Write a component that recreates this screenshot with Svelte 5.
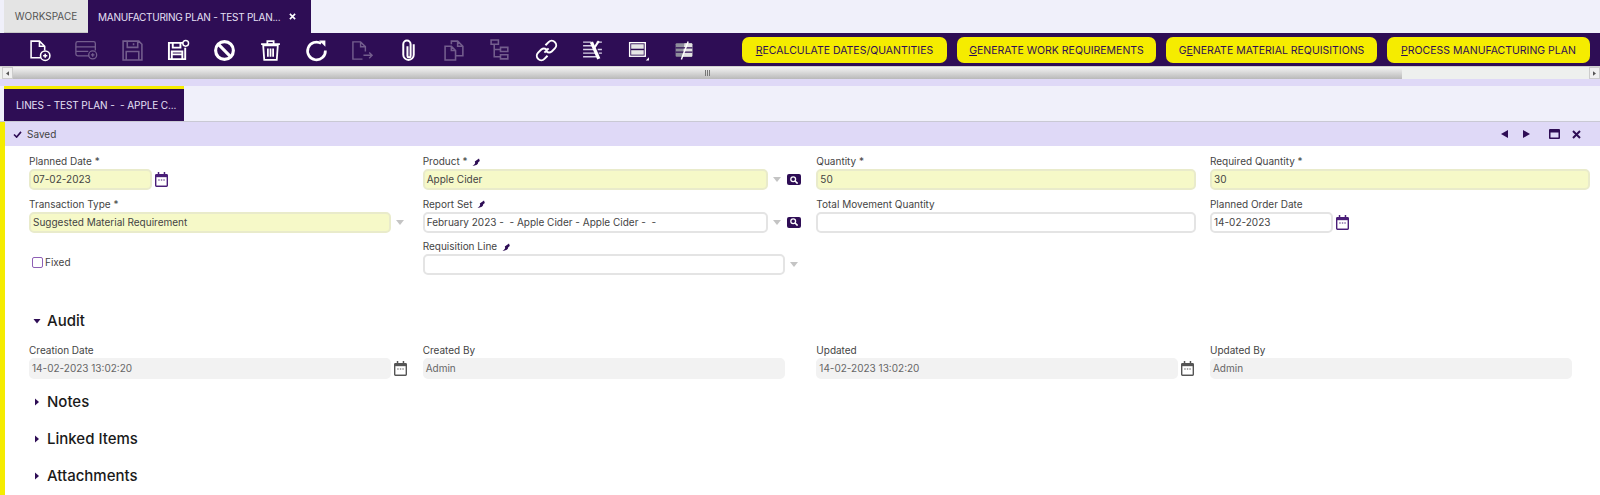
<script>
  const buttons = [
    { key: 'R', rest: 'ECALCULATE DATES/QUANTITIES', width: 205 },
    { key: 'G', rest: 'ENERATE WORK REQUIREMENTS', width: 199 },
    { pre: 'G', key: 'E', rest: 'NERATE MATERIAL REQUISITIONS', width: 211 },
    { key: 'P', rest: 'ROCESS MANUFACTURING PLAN', width: 203 }
  ];
  const sections = ['Notes', 'Linked Items', 'Attachments'];
</script>

{#snippet calendar(cls)}
  <svg class="cal {cls}" viewBox="0 0 14 16" width="13" height="15">
    <path d="M3 0h1.600v2H9.400V0H11v2h1.500A1.500 1.500 0 0 1 14 3.500v11A1.500 1.500 0 0 1 12.500 16h-11A1.500 1.500 0 0 1 0 14.500v-11A1.500 1.500 0 0 1 1.500 2H3z" fill="currentColor" />
    <rect x="1.500" y="5.500" width="11" height="9" fill="#fff" />
    <path d="M3.500 8.500h1.500M6.300 8.500h1.500M9 8.500h1.500" stroke="currentColor" stroke-width="1.200" />
  </svg>
{/snippet}

{#snippet arrow()}
  <svg class="drop" viewBox="0 0 8 5" width="8" height="5"><path d="M0 0h8L4 5z" fill="#c4c4c4" /></svg>
{/snippet}

{#snippet search()}
  <span class="search">
    <svg viewBox="0 0 10 10" width="8" height="8"><circle cx="4" cy="4" r="3" fill="none" stroke="#fff" stroke-width="1.600" /><path d="M6.300 6.300L9.500 9.500" stroke="#fff" stroke-width="2" /></svg>
  </span>
{/snippet}

{#snippet pin()}
  <svg class="pin" viewBox="0 0 8 9" width="8" height="9"><path d="M.5 9c1.500-1 2.300-2 2.700-3L2.800 4.500 7 1.500 7.800 4 6.200 5.300C6.200 7 5 8.300.5 9z" fill="#2e0d55" /></svg>
{/snippet}

<div class="page">
  <div class="tabs">
    <div class="tab plain">WORKSPACE</div>
    <div class="tab active">
      <span>MANUFACTURING PLAN - TEST PLAN...</span>
      <svg viewBox="0 0 8 8" width="7" height="7"><path d="M1 1l6 6M7 1l-6 6" stroke="#fff" stroke-width="1.800" /></svg>
    </div>
  </div>

  <div class="toolbar">
    <div class="icons">
      <!-- new -->
      <span class="ico"><svg viewBox="0 0 22 22"><path d="M11 18H2V2h8l5 5v4M10 2v5h5" /><circle cx="15.500" cy="16" r="4.500" /><path d="M13.500 16h4M15.500 14v4" /></svg></span>
      <!-- new row -->
      <span class="ico off"><svg viewBox="0 0 26 22"><path d="M16 17H3a2 2 0 0 1-2-2V3a2 2 0 0 1 2-2h18a2 2 0 0 1 2 2v8M1 7h22M1 12h14" /><circle cx="20" cy="16" r="4.500" /><path d="M18 16h4M20 14v4" /></svg></span>
      <!-- save -->
      <span class="ico off"><svg viewBox="0 0 22 22"><path d="M2 2h15l3 3v15H2zM6 2v6h10V2M5 20v-8h12v8M12 4v2" /></svg></span>
      <!-- save & new -->
      <span class="ico"><svg viewBox="0 0 24 22"><path d="M17 3H2v17h17V8M6 3v5h8V3M5 20v-8h11v8M5 15h11" stroke-width="2" /><circle cx="19.500" cy="3.500" r="3" /></svg></span>
      <!-- undo -->
      <span class="ico"><svg viewBox="0 0 22 22"><circle cx="11" cy="11" r="8.500" stroke-width="3" /><path d="M5 5l12 12" stroke-width="3" /></svg></span>
      <!-- delete -->
      <span class="ico"><svg viewBox="0 0 22 22"><path d="M4 6h14l-1 14H5zM2 5h18M8 4V2h6v2M8.500 9v8M11 9v8M13.500 9v8" stroke-width="1.700" /></svg></span>
      <!-- refresh -->
      <span class="ico"><svg viewBox="0 0 22 22"><path d="M15.500 4.200A8.500 8.500 0 1 0 19.500 11" stroke-width="2.600" /><path d="M13.500 1.500h6v6z" fill="#fff" stroke="none" /></svg></span>
      <!-- export -->
      <span class="ico off"><svg viewBox="0 0 24 22"><path d="M12 20H2V2h8l5 5v5M10 2v5h5M13 16h9M19 13l3 3-3 3" /></svg></span>
      <!-- attachment -->
      <span class="ico"><svg viewBox="0 0 22 22"><path d="M10 7v9a1.500 1.500 0 0 0 3 0V5a3.500 3.500 0 0 0-7 0V15a5 5 0 0 0 10 0V5" stroke-width="1.900" /></svg></span>
      <!-- copy -->
      <span class="ico off"><svg viewBox="0 0 22 22"><path d="M8 5V2h6l5 5v9h-7M14 2v5h5M2 7h6l4 4v9H2zM8 7v4h4" /></svg></span>
      <!-- tree -->
      <span class="ico off"><svg viewBox="0 0 22 22"><path d="M2 1h7v4H2zM11 8h7v4h-7zM11 15h7v4h-7zM5 5v12h6M5 10h6" /></svg></span>
      <!-- link -->
      <span class="ico"><svg viewBox="0 0 22 22"><path d="M9 13l4-4M10 6l3-3a4 4 0 0 1 6 6l-3 3a4 4 0 0 1-5 0M12 16l-3 3a4 4 0 0 1-6-6l3-3a4 4 0 0 1 5 0" stroke-width="1.900" /></svg></span>
      <!-- tools -->
      <span class="ico"><svg viewBox="0 0 22 22">
        <path d="M2 3h8M15 3h5M2 6.500h9M2 10h11M16 10h4M2 13.500h12M17 13.500h3M2 17h13" stroke="#d8d2e6" stroke-width="1.300" />
        <path d="M10 3l7 16" stroke-width="3.200" />
        <path d="M13 8l4-6" stroke-width="2" />
      </svg></span>
      <!-- grid view -->
      <span class="ico"><svg viewBox="0 0 22 22">
        <rect x="2.500" y="3.500" width="15" height="13" fill="#2e0d55" stroke-width="1.300" />
        <rect x="4" y="5" width="12" height="4.300" fill="#e6e6e6" stroke="none" />
        <rect x="4" y="10.700" width="12" height="4.300" fill="#e6e6e6" stroke="none" />
        <path d="M21 17.500v3h-3z" fill="#fff" stroke="none" />
      </svg></span>
      <!-- notes -->
      <span class="ico"><svg viewBox="0 0 22 22">
        <rect x="2.500" y="4" width="16" height="13" rx="1" fill="#8f8f9c" stroke="none" />
        <path d="M11 4h6.500a1 1 0 0 1 1 1v11a1 1 0 0 1-1 1H9z" fill="#e2e2e2" stroke="none" />
        <path d="M2.500 8.500h16M2.500 12.500h16" stroke="#2e0d55" stroke-width="1.100" />
        <path d="M8 19.500L14.500 2.500" stroke="#fff" stroke-width="1.400" />
      </svg></span>
    </div>
    <div class="actions">
      {#each buttons as b}
        <button class="action" style="width:{b.width}px">{b.pre ?? ''}<u>{b.key}</u>{b.rest}</button>
      {/each}
      <button class="action"> </button>
    </div>
  </div>

  <div class="hscroll">
    <span class="sbtn">
      <svg viewBox="0 0 4 6" width="3" height="5"><path d="M4 0v6L0 3z" fill="#555" /></svg>
    </span>
    <div class="thumb"><i></i><i></i><i></i></div>
    <div class="track"></div>
    <span class="sbtn right">
      <svg viewBox="0 0 4 6" width="3" height="5"><path d="M0 0v6l4-3z" fill="#555" /></svg>
    </span>
  </div>
  <div class="band"></div>

  <div class="subtabs">
    <div class="subtab">LINES - TEST PLAN -  - APPLE C...</div>
  </div>

  <div class="panel">
    <div class="status">
      <div class="saved">
        <svg viewBox="0 0 10 8" width="9" height="7"><path d="M1 4l3 3 5-6" fill="none" stroke="#2e0d55" stroke-width="1.800" /></svg>
        <span>Saved</span>
      </div>
      <div class="nav">
        <svg viewBox="0 0 7 8" width="7" height="8"><path d="M7 0v8L0 4z" /></svg>
        <svg viewBox="0 0 7 8" width="7" height="8"><path d="M0 0v8l7-4z" /></svg>
        <svg class="max" viewBox="0 0 11 10" width="11" height="10"><path d="M1 0h9a1 1 0 0 1 1 1v8a1 1 0 0 1-1 1H1a1 1 0 0 1-1-1V1a1 1 0 0 1 1-1zm.5 3.500v5h8v-5z" /></svg>
        <svg viewBox="0 0 9 9" width="9" height="9"><path d="M1 1l7 7M8 1L1 8" stroke="#2e0d55" stroke-width="2" /></svg>
      </div>
    </div>

    <div class="form">
      <div class="field">
        <label>Planned Date *</label>
        <div class="row"><div class="input req date">07-02-2023</div>{@render calendar('')}</div>
      </div>
      <div class="field">
        <label>Product * {@render pin()}</label>
        <div class="row"><div class="input req lookup">Apple Cider</div>{@render arrow()}{@render search()}</div>
      </div>
      <div class="field">
        <label>Quantity *</label>
        <div class="row"><div class="input req wide">50</div></div>
      </div>
      <div class="field">
        <label>Required Quantity *</label>
        <div class="row"><div class="input req wide">30</div></div>
      </div>

      <div class="field">
        <label>Transaction Type *</label>
        <div class="row"><div class="input req select">Suggested Material Requirement</div>{@render arrow()}</div>
      </div>
      <div class="field">
        <label>Report Set {@render pin()}</label>
        <div class="row"><div class="input lookup">February 2023 -  - Apple Cider - Apple Cider -  -</div>{@render arrow()}{@render search()}</div>
      </div>
      <div class="field">
        <label>Total Movement Quantity</label>
        <div class="row"><div class="input wide"></div></div>
      </div>
      <div class="field">
        <label>Planned Order Date</label>
        <div class="row"><div class="input date">14-02-2023</div>{@render calendar('')}</div>
      </div>

      <div class="field fixed">
        <span class="check"></span>
        <span>Fixed</span>
      </div>
      <div class="field">
        <label>Requisition Line {@render pin()}</label>
        <div class="row"><div class="input select"></div>{@render arrow()}</div>
      </div>
    </div>

    <h3 class="section first">
      <svg viewBox="0 0 8 8" width="8" height="8"><path d="M.5 2h7L4 6.500z" fill="#2e0d55" /></svg>
      Audit
    </h3>
    <div class="form audit">
      <div class="field">
        <label>Creation Date</label>
        <div class="row"><div class="input ro select">14-02-2023 13:02:20</div>{@render calendar('grey')}</div>
      </div>
      <div class="field">
        <label>Created By</label>
        <div class="row"><div class="input ro select">Admin</div></div>
      </div>
      <div class="field">
        <label>Updated</label>
        <div class="row"><div class="input ro select">14-02-2023 13:02:20</div>{@render calendar('grey')}</div>
      </div>
      <div class="field">
        <label>Updated By</label>
        <div class="row"><div class="input ro select">Admin</div></div>
      </div>
    </div>

    {#each sections as s}
      <h3 class="section">
        <svg viewBox="0 0 8 8" width="8" height="8"><path d="M2 .5v7L6 4z" fill="#2e0d55" /></svg>
        {s}
      </h3>
    {/each}
  </div>
</div>

<style>
  :global(body) {
    margin: 0;
    background: #fff;
  }

  .page {
    width: 1600px;
    height: 495px;
    overflow: hidden;
    background: #f0f0fa;
    font-family: Inter, "Open Sans", sans-serif;
    color: #333;
  }

  .tabs {
    display: flex;
    height: 33px;
    padding-left: 4px;
    box-sizing: border-box;
  }
  .tab {
    display: flex;
    align-items: center;
    font-size: 10px;
    box-sizing: border-box;
  }
  .tab.plain {
    width: 84px;
    justify-content: center;
    background: #e4e4e4;
    color: #555;
    border-bottom: 1px solid #c8c8c8;
  }
  .tab.active {
    width: 223px;
    padding-left: 10px;
    gap: 9px;
    background: #2e0d55;
    color: #e6e0f5;
    letter-spacing: -0.25px;
    white-space: nowrap;
  }

  .toolbar {
    display: flex;
    align-items: center;
    height: 33px;
    background: #2e0d55;
    overflow: hidden;
  }
  .icons {
    display: flex;
    flex: none;
    padding-left: 17px;
    padding-top: 1px;
  }
  .ico {
    display: flex;
    align-items: center;
    justify-content: center;
    width: 46px;
    height: 26px;
  }
  .ico svg {
    width: 23px;
    height: 23px;
    fill: none;
    stroke: #fff;
    stroke-width: 1.500;
  }
  .ico.off svg {
    opacity: 0.33;
  }
  .actions {
    display: flex;
    flex: none;
    gap: 10px;
    margin-left: 35px;
  }
  .action {
    flex: none;
    height: 26px;
    margin: 0;
    padding: 1px 0 0;
    border: 0;
    border-radius: 7px;
    background: #f5ec00;
    color: #2e0d55;
    font: 10.500px Inter, "Open Sans", sans-serif;
    white-space: nowrap;
  }
  .action:last-child {
    width: 40px;
  }

  .hscroll {
    display: flex;
    height: 12px;
    padding-left: 2px;
    background: #eef0ee;
    border-top: 1px solid #d0d0d0;
  }
  .sbtn {
    display: flex;
    align-items: center;
    justify-content: center;
    flex: none;
    width: 11px;
    background: #f0f0f0;
    border: 1px solid #ccc;
    box-sizing: border-box;
  }
  .thumb {
    display: flex;
    flex: none;
    align-items: center;
    justify-content: center;
    gap: 1px;
    width: 1389px;
    background: linear-gradient(#f4f4f4, #b9b9b9);
  }
  .thumb i {
    width: 1px;
    height: 6px;
    background: #777;
  }
  .track {
    flex: 1;
  }
  .band {
    height: 7px;
    background: #dfd9f7;
  }

  .subtabs {
    height: 35px;
    padding-left: 4px;
    border-bottom: 1px solid #c9c9d4;
  }
  .subtab {
    display: flex;
    align-items: center;
    width: 168px;
    height: 32px;
    padding-left: 12px;
    border-top: 3px solid #f5ec00;
    background: #2e0d55;
    color: #e6e0f5;
    font-size: 10px;
    letter-spacing: -0.1px;
    white-space: pre;
  }

  .panel {
    height: 373px;
    border-left: 5px solid #f5ec00;
    background: #fff;
    overflow: hidden;
  }
  .status {
    display: flex;
    align-items: center;
    justify-content: space-between;
    height: 24px;
    padding: 0 19px 0 8px;
    background: #dfd9f7;
  }
  .saved {
    display: flex;
    align-items: center;
    gap: 5px;
    font-size: 10px;
    color: #444;
  }
  .nav {
    display: flex;
    align-items: center;
    gap: 15px;
    fill: #2e0d55;
  }
  .nav .max {
    margin-left: 4px;
    margin-right: -3px;
  }

  .form {
    display: grid;
    grid-template-columns: repeat(4, 393.670px);
    row-gap: 6.500px;
    padding: 8px 0 0 24px;
  }
  .audit {
    padding-top: 4px;
  }
  .field label {
    display: flex;
    align-items: center;
    gap: 5px;
    height: 14px;
    margin-bottom: 1px;
    font-size: 10px;
    color: #444;
    white-space: nowrap;
  }
  .row {
    display: flex;
    align-items: center;
  }
  .input {
    height: 21px;
    padding: 0 3px 0 2px;
    border: 2px solid #e4e4e4;
    border-radius: 5px;
    background: #fff;
    color: #444;
    font-size: 10px;
    line-height: 17px;
    white-space: pre;
    box-sizing: border-box;
  }
  .req {
    background: #f6f9c8;
    border-color: #e9ebcb;
  }
  .ro {
    background: #f2f2f2;
    border-color: #f2f2f2;
    color: #666;
    padding-left: 1px;
  }
  .date {
    width: 123px;
  }
  .lookup {
    width: 345px;
  }
  .select {
    width: 362px;
  }
  .wide {
    width: 380px;
  }
  .cal {
    flex: none;
    margin-left: 3px;
    color: #4a1e78;
  }
  .cal.grey {
    color: #555;
  }
  .drop {
    flex: none;
    margin-left: 5px;
  }
  .search {
    display: flex;
    align-items: center;
    justify-content: center;
    flex: none;
    width: 14px;
    height: 11px;
    margin-left: 6px;
    border-radius: 2px;
    background: #2e0d55;
  }
  .pin {
    flex: none;
  }
  .fixed {
    display: flex;
    align-items: center;
    gap: 2px;
    height: 36px;
    padding: 10px 0 0 3px;
    box-sizing: border-box;
    font-size: 10px;
    color: #444;
  }
  .check {
    width: 9px;
    height: 9px;
    border: 1px solid #8e5fb5;
    border-radius: 2px;
  }

  .section {
    display: flex;
    align-items: center;
    gap: 6px;
    height: 37px;
    margin: 0;
    padding-left: 28px;
    font-size: 15px;
    font-weight: 500;
    color: #1a1a1a;
    box-sizing: border-box;
  }
  .section.first {
    margin-top: 27px;
  }
  .audit + .section {
    margin-top: 4px;
  }
</style>
